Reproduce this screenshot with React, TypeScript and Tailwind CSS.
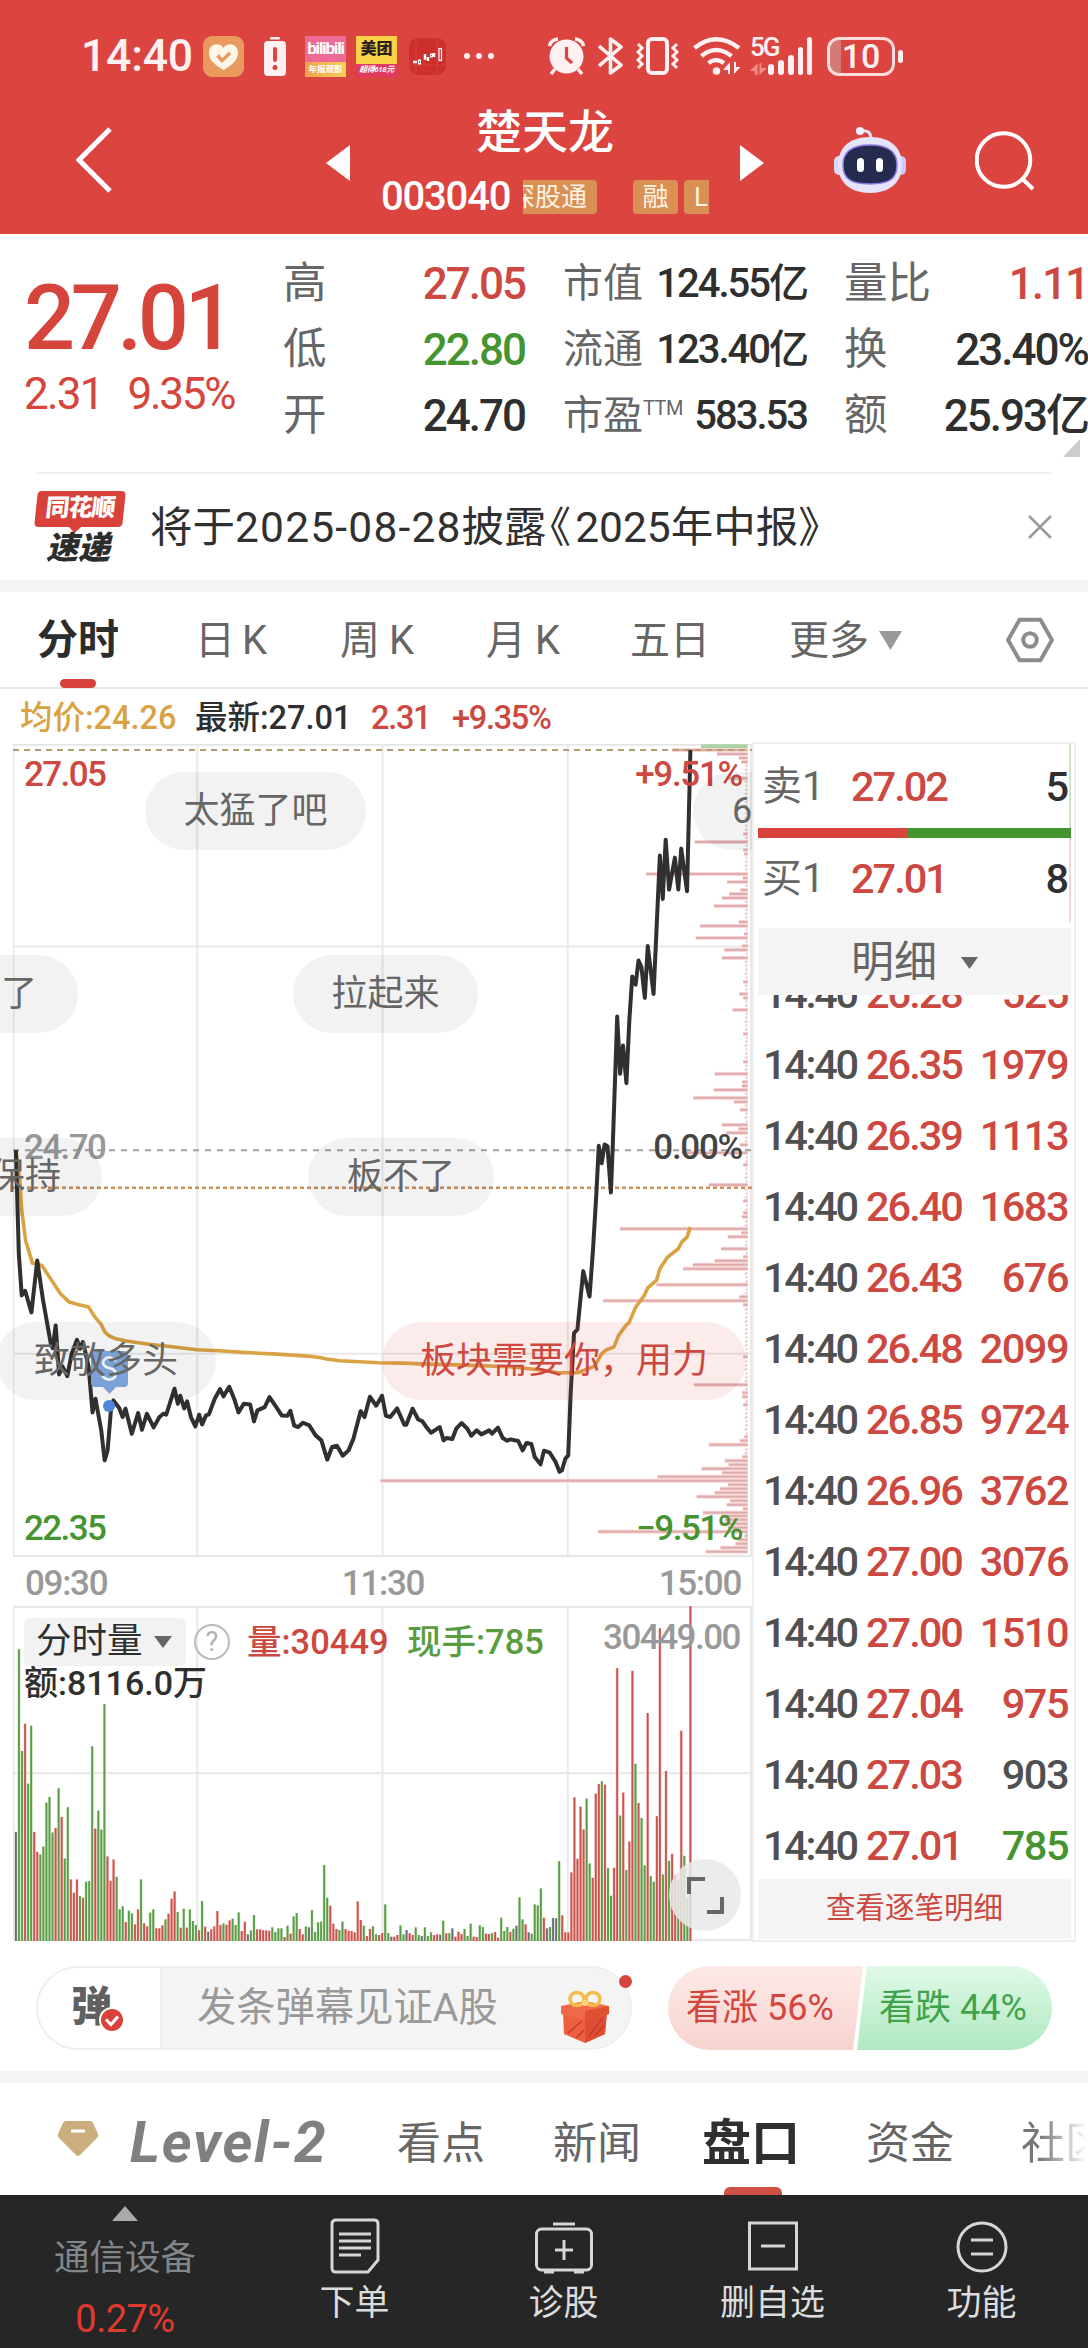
import React from 'react';

type Tone = 'red' | 'green' | 'dark' | 'gray';

interface Trade {
  price: string;
  volume: string;
  tone: Tone;
}

interface Bubble {
  text: string;
  box: string;
  hot?: boolean;
}

const toneClass: Record<Tone, string> = {
  red: 'text-[#cc4840]',
  green: 'text-[#46942f]',
  dark: 'text-[#2f2f2f]',
  gray: 'text-[#505050]',
};

const trades: Trade[] = [
  { price: '26.28', volume: '525', tone: 'red' },
  { price: '26.35', volume: '1979', tone: 'red' },
  { price: '26.39', volume: '1113', tone: 'red' },
  { price: '26.40', volume: '1683', tone: 'red' },
  { price: '26.43', volume: '676', tone: 'red' },
  { price: '26.48', volume: '2099', tone: 'red' },
  { price: '26.85', volume: '9724', tone: 'red' },
  { price: '26.96', volume: '3762', tone: 'red' },
  { price: '27.00', volume: '3076', tone: 'red' },
  { price: '27.00', volume: '1510', tone: 'red' },
  { price: '27.04', volume: '975', tone: 'red' },
  { price: '27.03', volume: '903', tone: 'gray' },
  { price: '27.01', volume: '785', tone: 'green' },
];

const bubbles: Bubble[] = [
  { text: '太猛了吧', box: 'left-[145px] top-[28px] w-[221px]' },
  { text: '6', box: 'left-[693px] top-[28px] w-[98px]' },
  { text: '来了', box: 'left-[-76px] top-[211px] w-[154px]' },
  { text: '拉起来', box: 'left-[293px] top-[211px] w-[185px]' },
  { text: '保持', box: 'left-[-52px] top-[394px] w-[154px]' },
  { text: '板不了', box: 'left-[308px] top-[394px] w-[186px]' },
  { text: '致敬多头', box: 'left-[-4px] top-[578px] w-[220px]' },
  { text: '板块需要你，用力', box: 'left-[382px] top-[578px] w-[364px]', hot: true },
];

const pricePath =
  'M32,1219 38,1530 44,1655 51,1641 64,1706 76,1550 88,1670 104,1800 108,1813 114,1745 121,1892 128,1868 138,1897 147,1830 158,1788 164,1815 170,1795 176,1830 182,1870 190,2006 196,1965 208,2060 215,2150 221,2121 228,1999 233,1970 245,1993 252,2020 258,1995 271,2070 284,2008 292,2058 302,2010 316,2051 328,2020 336,2010 342,2013 359,1935 366,1980 371,1956 379,1994 385,1973 393,2020 402,2048 410,2013 416,2042 424,2015 430,2012 442,1965 453,1936 460,1958 472,1929 482,1965 491,2006 502,1980 515,1982 523,2033 530,2000 545,1990 555,1960 568,1988 580,2015 592,2016 598,2001 606,2046 614,2050 624,2037 637,2045 650,2075 662,2090 674,2148 684,2110 694,2106 706,2136 718,2120 728,2085 743,2002 751,2020 762,1959 775,1986 787,1956 795,2016 804,2020 818,1994 833,2043 837,2043 850,1995 862,2028 870,2032 880,2053 888,2067 906,2050 914,2090 920,2083 932,2086 940,2055 951,2038 963,2055 971,2076 982,2060 992,2072 1008,2060 1014,2070 1026,2052 1036,2083 1045,2091 1052,2087 1068,2092 1077,2120 1085,2098 1095,2101 1102,2140 1114,2162 1121,2121 1133,2127 1145,2155 1153,2184 1158,2180 1165,2145 1171,2135 1176,1950 1183,1768 1190,1757 1202,1582 1215,1658 1222,1520 1229,1350 1234,1206 1240,1258 1246,1202 1252,1207 1259,1346 1263,1200 1272,818 1278,990 1284,905 1291,1018 1297,830 1303,698 1310,722 1316,650 1322,670 1329,762 1335,606 1347,750 1353,560 1360,335 1366,465 1372,287 1379,437 1391,341 1398,437 1404,314 1416,442 1423,18';

const avgPath =
  'M32,1219 40,1310 44,1400 52,1490 66,1558 76,1560 86,1566 104,1606 124,1650 142,1675 160,1682 182,1690 195,1720 208,1742 215,1764 224,1776 236,1784 260,1792 285,1797 310,1802 350,1808 405,1818 450,1821 500,1826 570,1831 640,1838 662,1842 672,1846 700,1851 780,1857 830,1858 880,1861 960,1864 1050,1869 1090,1875 1120,1880 1150,1887 1190,1887 1225,1868 1240,1830 1250,1818 1265,1810 1275,1775 1290,1745 1297,1735 1310,1690 1328,1655 1335,1632 1353,1610 1360,1575 1376,1540 1398,1515 1405,1495 1416,1480 1423,1450';

// [y, left edge] of each price level in the distribution on the right side
const levels: [number, number][] = [
  [18, 1385], [30, 1478], [42, 1523], [54, 1528], [103, 1500], [270, 1532], [294, 1432], [318, 1532], [330, 1534], [390, 1332],
  [402, 1531], [414, 1499], [438, 1526], [450, 1503], [462, 1488], [486, 1472], [534, 1523], [546, 1443], [570, 1534],
  [582, 1434], [606, 1530], [618, 1493], [642, 1488], [714, 1532], [750, 1524], [762, 1532], [798, 1510], [870, 1532], [954, 1532],
  [990, 1473], [1014, 1530], [1026, 1529], [1038, 1471], [1062, 1429], [1074, 1513], [1098, 1525], [1143, 1488],
  [1155, 1522], [1167, 1497], [1203, 1525], [1227, 1405], [1263, 1532], [1323, 1461], [1371, 1532], [1407, 1532], [1419, 1529],
  [1455, 1278], [1467, 1528], [1479, 1500], [1515, 1486], [1539, 1532], [1551, 1473], [1563, 1428], [1575, 1408],
  [1623, 1353], [1659, 1524], [1671, 1243], [1683, 1532], [1839, 1532], [1923, 1430], [1947, 1530], [1959, 1530], [1983, 1532],
  [2079, 1534], [2091, 1525], [2103, 1461], [2139, 1530], [2151, 1494], [2163, 1502], [2175, 1446], [2187, 1488], [2199, 1355],
  [2211, 784], [2223, 1501], [2235, 1484], [2247, 1473], [2259, 1436], [2271, 1505], [2283, 1498], [2295, 1531],
  [2307, 1449], [2317, 1486], [2328, 1494], [2340, 1484], [2352, 1500], [2364, 1233], [2376, 1535], [2388, 1521],
  [2400, 1516], [2412, 1485], [2424, 1455],
];

// One entry per minute: color letter followed by the bar height
const volumeData =
  'k328 g877 g571 r653 g473 g647 r328 r268 g260 g284 g416 g433 g326 r340 g459 r373 g248 g402 r185 r145 r185 g135 r130 g178 g180 g585 r338 g392 g335 g712 r254 r181 r245 g193 g95 g104 r57 g91 g83 r50 r95 g185 r53 r44 g85 g95 r38 r38 r47 g65 r82 r127 r149 g87 r40 g97 r40 g95 g60 g48 r32 g120 r43 k28 r35 r44 r90 r48 g53 r49 r62 g67 g48 g86 r30 r58 k20 g32 g78 r35 r35 r32 r32 r31 g41 g27 g38 g38 r12 g46 r22 g74 g84 r36 r20 g44 k41 g93 g27 g56 g58 g228 g130 r106 r52 r36 g33 g58 r36 r31 r30 r26 r119 r63 g46 r15 r36 g44 g20 r18 r24 g110 g24 k13 r13 r18 g47 g20 k33 r23 r18 g41 g18 k15 g41 g15 g26 r18 r20 k19 g61 r23 g24 k38 r13 r28 r21 g36 g15 g52 r13 r12 g47 g42 r22 r21 g23 r27 r10 g70 g30 g42 r27 g37 k46 g131 g65 r50 k26 g22 g110 g107 g158 r70 k38 g42 k69 k68 g240 r77 r26 r26 r206 r432 r247 r404 r335 g428 g233 r190 r443 r472 g480 r470 g219 g136 r220 r820 g377 r446 g213 r299 r812 g533 r415 g370 g227 r685 g195 g178 r375 r940 g200 r511 g241 r262 r197 g182 r632 g256 g128 r1007';

const barColor: Record<string, string> = { r: '#c9544d', g: '#5a9c47', k: '#6c6c74' };
const barGlow: Record<string, string> = { r: '#f6c6c4', g: '#c9e4c0', k: '#d4d4dc' };

const StatusBar: React.FC = () => (
  <div className="flex h-[112px] items-center pl-[81px] text-[#fff1f1]">
    <span className="w-[122px] text-[44.500px] leading-none font-medium tracking-[-0.200px]">14:40</span>
    <svg className="h-[41px] w-[41px]" viewBox="0 0 41 41">
      <rect width="41" height="41" rx="9" fill="#ea9a5d" />
      <path d="M20.500 34C12 29 6 24 6 17C6 7 17 6 20.500 12C24 6 35 7 35 17C35 24 29 29 20.500 34Z" fill="#fff6ea" />
      <path d="M14.500 19.500L19 24.500L27 17" fill="none" stroke="#ea9a5d" strokeWidth="3.500" />
    </svg>
    <svg className="ml-[20px] h-[39px] w-[22px]" viewBox="0 0 22 39">
      <rect x="6" width="10" height="2.500" rx="1" fill="#fff1f1" />
      <rect y="4" width="22" height="35" rx="4" fill="#fff1f1" />
      <path d="M11 12V23" stroke="#dc4440" strokeWidth="4" strokeLinecap="round" />
      <circle cx="11" cy="30.500" r="2.500" fill="#dc4440" />
    </svg>
    <div className="ml-[19px] flex h-[41px] w-[41px] flex-col overflow-hidden bg-[#ec6a95] text-center whitespace-nowrap">
      <div className="h-[26px] text-[17px] leading-[25px] font-bold tracking-[-1.200px] text-white">bilibili</div>
      <div className="h-[15px] bg-gradient-to-r from-[#efa24c] to-[#f6cf58] text-[8.500px] leading-[15px] font-bold text-white">年报观影</div>
    </div>
    <div className="ml-[10px] flex h-[41px] w-[41px] flex-col overflow-hidden bg-[#fad247] text-center whitespace-nowrap">
      <div className="h-[28px] text-[16px] leading-[26px] font-black text-[#2a2418]">美团</div>
      <div className="h-[13px] bg-[#e03a63] text-[8px] leading-[12px] font-bold tracking-[-0.500px] text-white italic">超得618元</div>
    </div>
    <svg className="ml-[12px] h-[37px] w-[37px]" viewBox="0 0 37 37">
      <rect width="37" height="37" rx="9" fill="#cd2f2c" />
      <path d="M0 27H37M7 0V37M28 0V37" stroke="#d8403b" />
      <path d="M4 24H8M16 16V22M19 19V23M25 15V19" stroke="#fff" strokeWidth="2.500" />
      <rect x="9.500" y="22" width="2" height="4" fill="none" stroke="#fff" />
      <rect x="21.500" y="16" width="2" height="3" fill="none" stroke="#fff" />
      <rect x="30" y="10.500" width="2.500" height="12" fill="none" stroke="#fff" strokeWidth="1.200" />
    </svg>
    <div className="ml-[18px] flex gap-[6px]">
      <i className="h-[6px] w-[6px] rounded-full bg-[#fff1f1]" />
      <i className="h-[6px] w-[6px] rounded-full bg-[#fff1f1]" />
      <i className="h-[6px] w-[6px] rounded-full bg-[#fff1f1]" />
    </div>
    <svg className="ml-[54px] h-[38px] w-[37px]" viewBox="0 0 37 38" fill="none" stroke="#fff1f1">
      <circle cx="18.500" cy="19.500" r="17" fill="#fff1f1" stroke="none" />
      <path d="M1.500 9Q3 2.500 10 2M35.500 9Q34 2.500 27 2M7 32L3 37M30 32L34 37" strokeWidth="3.500" />
      <path d="M18.500 10V21L24 26" stroke="#dc4440" strokeWidth="3.200" />
    </svg>
    <svg className="ml-[13px] h-[38px] w-[25px]" viewBox="0 0 25 38" fill="none" stroke="#fff1f1" strokeWidth="3.600">
      <path d="M1 9L23 28L12.500 36V2L23 10L1 29" strokeLinejoin="round" />
    </svg>
    <svg className="ml-[13px] h-[38px] w-[43px]" viewBox="0 0 43 38" fill="none" stroke="#fff1f1">
      <rect x="12" y="2" width="19" height="34" rx="4" strokeWidth="4" />
      <path d="M2 7L6 11L2 15L6 19L2 23L6 27L2 31M41 7L37 11L41 15L37 19L41 23L37 27L41 31" strokeWidth="3" />
    </svg>
    <svg className="ml-[14px] h-[38px] w-[48px]" viewBox="0 0 48 38" fill="none" stroke="#fff1f1" strokeWidth="4.400">
      <path d="M1.500 11Q23 -6.500 46 11M8.500 19Q23 7 38.500 19M15.500 26Q23 20 31 26" />
      <circle cx="23.500" cy="34" r="3.800" fill="#fff1f1" stroke="none" />
      <path d="M37 37V25L30 33H35V37ZM41 25V37L47.500 30H43V25Z" fill="#fff1f1" stroke="none" />
    </svg>
    <div className="ml-[9px] flex h-[38px] w-[62px] items-end gap-[4px]">
      <div className="relative h-full w-[15px]">
        <span className="absolute top-0 left-0 text-[26px] leading-[20px] font-medium tracking-[-2px]">5G</span>
        <svg className="absolute bottom-0 left-0 h-[12px] w-[17px]" viewBox="0 0 18 12" fill="#ef8f8c">
          <path d="M8 12V0L0 8H5V12ZM10 0V12L18 5H12V0Z" />
        </svg>
      </div>
      <i className="h-[11px] w-[6px] shrink-0 rounded-sm bg-[#fff1f1]" />
      <i className="h-[15px] w-[6px] shrink-0 rounded-sm bg-[#fff1f1]" />
      <i className="h-[20px] w-[6px] shrink-0 rounded-sm bg-[#fff1f1]" />
      <i className="h-[28px] w-[5px] shrink-0 rounded-sm bg-[#fff1f1]" />
      <i className="h-[38px] w-[5px] shrink-0 rounded-sm bg-[#fff1f1]" />
    </div>
    <div className="ml-[15px] flex h-[39px] w-[68px] items-center justify-center rounded-[12px] border-[3px] border-[#fbdcdb] bg-gradient-to-r from-[#d27a75] from-18% to-transparent to-18% text-[34px] leading-none font-medium">
      10
    </div>
    <i className="ml-[3px] h-[13px] w-[5px] rounded-sm bg-[#fff1f1]" />
  </div>
);

const Header: React.FC = () => (
  <header className="h-[234px] bg-[#dc4440] text-white">
    <StatusBar />
    <div className="flex h-[110px] items-center">
      <svg className="mt-[-15px] ml-[76px] h-[66px] w-[36px]" viewBox="0 0 36 66" fill="none" stroke="#fff" strokeWidth="5">
        <path d="M34 2L3 33L34 64" />
      </svg>
      <svg className="mt-[-8px] ml-[214px] h-[36px] w-[24px]" viewBox="0 0 24 36" fill="#fff">
        <path d="M24 0V36L0 18Z" />
      </svg>
      <div className="mt-[-13px] flex w-[390px] flex-col items-center">
        <h1 className="text-[46px] leading-[50px] font-medium">楚天龙</h1>
        <div className="mt-[23px] flex h-[34px] items-center">
          <span className="w-[142px] text-[40px] leading-none font-medium tracking-[-1.200px]">003040</span>
          <div className="flex w-[186px] overflow-hidden text-[26px] leading-[34px] text-[#fff3e4]">
            <span className="ml-[-14px] shrink-0 rounded bg-[#d89055] pr-[10px]">深股通</span>
            <span className="ml-[36px] w-[45px] shrink-0 rounded bg-[#d89055] text-center">融</span>
            <span className="ml-[6px] w-[45px] shrink-0 rounded bg-[#d89055] pl-[10px] tracking-[3px]">L2</span>
          </div>
        </div>
      </div>
      <svg className="mt-[-8px] h-[36px] w-[24px]" viewBox="0 0 24 36" fill="#fff">
        <path d="M0 0V36L24 18Z" />
      </svg>
      <svg className="mt-[-15px] ml-[70px] h-[66px] w-[72px]" viewBox="0 0 72 66">
        <path d="M26 4Q37 2 37 12" fill="none" stroke="#e9e1f7" strokeWidth="3" />
        <circle cx="26" cy="4" r="4" fill="#f3effc" />
        <rect x="0" y="29" width="10" height="19" rx="5" fill="#dcd8f8" />
        <rect x="62" y="29" width="10" height="19" rx="5" fill="#cdc9f6" />
        <path d="M36 10C58 10 68 22 68 38C68 55 56 66 36 66C16 66 4 55 4 38C4 22 14 10 36 10Z" fill="#e6e4fa" />
        <path d="M36 18C55 18 63 25 63 38C63 52 55 57 36 57C17 57 9 52 9 38C9 25 17 18 36 18Z" fill="#242b4e" stroke="#8b7be4" strokeWidth="1.500" />
        <rect x="23" y="31" width="7" height="14" rx="3.500" fill="#fff" />
        <rect x="42" y="31" width="7" height="14" rx="3.500" fill="#fff" />
      </svg>
      <svg className="mt-[-13px] ml-[69px] h-[60px] w-[60px]" viewBox="0 0 60 60" fill="none" stroke="#fff" strokeWidth="4">
        <circle cx="28.500" cy="29" r="26.800" />
        <path d="M47.500 48L58 58" />
      </svg>
    </div>
  </header>
);

const StatRow: React.FC<{ label: React.ReactNode; value: string; tone?: Tone; small?: boolean }> = ({
  label,
  value,
  tone = 'dark',
  small,
}) => (
  <div className="flex h-[66px] items-center justify-between whitespace-nowrap">
    <span className={small ? 'text-[40px] leading-none text-[#666]' : 'text-[43.500px] leading-none text-[#666]'}>{label}</span>
    <span
      className={`${small ? 'text-[40px] tracking-[-2px]' : 'text-[44px] tracking-[-2px]'} leading-none font-medium ${toneClass[tone]}`}
    >
      {value}
    </span>
  </div>
);

const Quote: React.FC = () => (
  <section className="relative flex h-[238px] pt-[17px]">
    <div className="w-[283px] pl-[24px] text-[#d6453c]">
      <div className="mt-[23px] text-[90px] leading-[90px] font-medium tracking-[-4.500px]">27.01</div>
      <div className="mt-[5px] flex gap-[25px] text-[44px] leading-[50px] tracking-[-1.800px]">
        <span>2.31</span>
        <span className="tracking-[-2.300px]">9.35%</span>
      </div>
    </div>
    <div className="w-[242px]">
      <StatRow label="高" value="27.05" tone="red" />
      <StatRow label="低" value="22.80" tone="green" />
      <StatRow label="开" value="24.70" />
    </div>
    <div className="ml-[38px] w-[244px]">
      <StatRow label="市值" value="124.55亿" small />
      <StatRow label="流通" value="123.40亿" small />
      <StatRow
        label={
          <span className="flex">
            市盈<span className="text-[20px] leading-[24px] tracking-[-0.500px]">TTM</span>
          </span>
        }
        value="583.53"
        small
      />
    </div>
    <div className="ml-[37px] w-[244px]">
      <StatRow label="量比" value="1.11" tone="red" />
      <StatRow label="换" value="23.40%" />
      <StatRow label="额" value="25.93亿" />
    </div>
    <svg className="absolute right-[8px] bottom-[15px] h-[18px] w-[17px]" viewBox="0 0 17 18" fill="#ccc">
      <path d="M17 0V18H0Z" />
    </svg>
  </section>
);

const NewsBar: React.FC = () => (
  <section className="mx-[36px] flex h-[108px] items-center border-t-2 border-[#efefef]">
    <div className="flex w-[114px] flex-col items-start">
      <div className="relative h-[36px] w-[88px] -skew-x-6 rounded bg-[#d8423b] text-center text-[24px] leading-[35px] font-black tracking-[-1px] text-white">
        同花顺
        <i className="absolute bottom-[-4px] left-[36px] h-[10px] w-[10px] rotate-45 bg-[#d8423b]" />
      </div>
      <div className="mt-[6px] ml-[10px] text-[32px] leading-[30px] font-black text-[#2d2d2d] italic">速递</div>
    </div>
    <span className="pt-[2px] text-[42.500px] leading-none whitespace-nowrap text-[#303030]">
      将于<span className="tracking-[1.200px]">2025-08-28</span>披露<span className="ml-[-18px] mr-[4px]">《</span>2025年中报》
    </span>
    <svg className="ml-auto h-[24px] w-[24px]" viewBox="0 0 24 24" stroke="#999" strokeWidth="2.500">
      <path d="M1 1L23 23M23 1L1 23" />
    </svg>
  </section>
);

const PeriodTabs: React.FC = () => (
  <nav className="flex h-[97px] items-center border-b-2 border-[#eaeaea] text-[40px] leading-none whitespace-nowrap text-[#666]">
    <div className="relative ml-[37px] w-[158px] pt-[2px] text-[41px] font-bold text-[#2c2c2c]">
      分时
      <i className="absolute top-[61px] left-[23px] h-[9px] w-[36px] rounded-full bg-[#d6423b]" />
    </div>
    <span className="w-[145px] pt-[2px] tracking-[-1.500px]">日 K</span>
    <span className="w-[146px] pt-[2px] tracking-[-0.500px]">周 K</span>
    <span className="w-[144px] pt-[2px] tracking-[-0.500px]">月 K</span>
    <span className="w-[159px] pt-[2px]">五日</span>
    <span className="flex w-[217px] items-center gap-[10px] pt-[2px]">
      更多
      <svg className="h-[20px] w-[23px]" viewBox="0 0 23 20" fill="#999">
        <path d="M0 0H23L11.500 19Z" />
      </svg>
    </span>
    <svg className="h-[46px] w-[48px]" viewBox="0 0 46 44" fill="none" stroke="#8c8c8c" strokeWidth="3.800" strokeLinejoin="round">
      <path d="M13 2.500H33L44 22L33 41.500H13L2 22Z" />
      <circle cx="23" cy="22" r="6.500" />
    </svg>
  </nav>
);

const PriceChart: React.FC = () => (
  <div className="relative h-[813px] w-[752px] overflow-hidden">
    <svg className="ml-[13px] h-[813px] w-[739px]" viewBox="26 0 1524 2440" preserveAspectRatio="none" fill="none">
      <path d="M27 0V2440M406 0V2440M788 0V2440M1170 0V2440M1548 0V2440M26 608H1550M26 1830H1550" stroke="#e9e9e9" strokeWidth="2" vectorEffect="non-scaling-stroke" />
      <path d="M26 2H1550M26 2437H1550" stroke="#e6e6e6" strokeWidth="2" vectorEffect="non-scaling-stroke" />
      {Array.from({ length: 200 }, (_, i) => (
        <rect key={i} x={1537 - ((i * 7) % 3)} y={14 + i * 12} width={4 + ((i * 7) % 3)} height="6" fill="#ecc4c4" />
      ))}
      {levels.map(([y, left]) => (
        <g key={y}>
          <rect x={left} y={y - 6} width={1541 - left} height="12" fill="#f8d5d5" />
          <rect x={left} y={y - 3} width={1541 - left} height="6" fill="#deacac" />
        </g>
      ))}
      <rect x="1445" y="1" width="96" height="11" fill="#abd2a3" />
      <path d="M26 18H1550" stroke="#b0a070" strokeWidth="2" strokeDasharray="6 5" vectorEffect="non-scaling-stroke" />
      <path d="M26 1219H1550" stroke="#a0a0a0" strokeWidth="2" strokeDasharray="6 6" vectorEffect="non-scaling-stroke" />
      <path d="M26 1332H1550" stroke="#cf8f57" strokeWidth="2.400" strokeDasharray="4 3" vectorEffect="non-scaling-stroke" />
      <path d={avgPath} stroke="#d9a344" strokeWidth="3.600" strokeLinejoin="round" vectorEffect="non-scaling-stroke" />
      <path d={pricePath} stroke="#303030" strokeWidth="4" strokeLinejoin="round" vectorEffect="non-scaling-stroke" />
    </svg>

    <svg className="absolute top-[607px] left-[91px] h-[62px] w-[37px]" viewBox="0 0 37 62">
      <path d="M4 0H33Q37 0 37 4V32Q37 36 33 36H25L18.500 43L12 36H4Q0 36 0 32V4Q0 0 4 0Z" fill="#83aae3" />
      <path d="M25 10Q18 3 13 9Q10 15 18 17Q27 19 24 26Q18 32 11 25" fill="none" stroke="#fff" strokeWidth="2.500" />
      <circle cx="18" cy="55" r="6" fill="#4f86dc" />
    </svg>

    <span className="absolute top-[13px] left-[24px] text-[35px] leading-none font-medium tracking-[-1.600px] text-[#cc4840]">27.05</span>
    <span className="absolute top-[13px] right-[10px] text-[35px] leading-none font-medium tracking-[-1.300px] text-[#cc4840]">+9.51%</span>
    <span className="absolute top-[386px] left-[24px] text-[35px] leading-none font-medium tracking-[-1.600px] text-[#999]">24.70</span>
    <span className="absolute top-[386px] right-[10px] text-[35px] leading-none font-medium tracking-[-1.300px] text-[#444]">0.00%</span>
    <span className="absolute top-[767px] left-[24px] text-[35px] leading-none font-medium tracking-[-1.600px] text-[#46942f]">22.35</span>
    <span className="absolute top-[767px] right-[10px] text-[35px] leading-none font-medium tracking-[-1.500px] text-[#46942f]">−9.51%</span>

    {bubbles.map((b) => (
      <div
        key={b.text}
        className={`absolute flex h-[78px] items-center justify-center rounded-full text-[36px] leading-none whitespace-nowrap ${b.box} ${
          b.hot ? 'bg-[#d6423b]/10 text-[#cc4840]' : 'bg-black/5 text-[#666]'
        }`}
      >
        {b.text}
      </div>
    ))}
  </div>
);

const VolumeChart: React.FC = () => (
  <div className="relative h-[335px] w-[752px]">
    <svg className="ml-[13px] h-[335px] w-[739px]" viewBox="26 0 1524 1007" preserveAspectRatio="none" fill="none">
      <path d="M27 0V1007M406 0V1007M788 0V1007M1170 0V1007M1548 0V1007M26 3H1550M26 503H1550M26 1004H1550" stroke="#e8e8e8" strokeWidth="2" vectorEffect="non-scaling-stroke" />
      {volumeData.split(' ').map((item, i) => {
        const h = Number(item.slice(1));
        const x = 32 + i * 6.294;
        return (
          <g key={i}>
            <rect x={x - 3} y={1007 - h} width="6" height={h} fill={barGlow[item[0]]} />
            <rect x={x - 1.9} y={1007 - h} width="3.800" height={h} fill={barColor[item[0]]} />
          </g>
        );
      })}
    </svg>
    <div className="absolute top-[12px] left-[24px] flex h-[48px] items-center whitespace-nowrap">
      <div className="flex h-full w-[162px] items-center gap-[11px] rounded-md bg-[#f2f2f2] pl-[12px] text-[35.500px] leading-none text-[#2f2f2f]">
        分时量
        <svg className="h-[12px] w-[18px]" viewBox="0 0 18 12" fill="#666">
          <path d="M0 0H18L9 12Z" />
        </svg>
      </div>
      <span className="ml-[8px] flex h-[36px] w-[36px] items-center justify-center rounded-full border-[2.500px] border-[#bbb] text-[27px] leading-none text-[#b0b0b0]">
        ?
      </span>
      <span className="ml-[17px] w-[160px] pt-[1px] text-[34.500px] leading-none font-medium text-[#cc4840]">量:30449</span>
      <span className="pt-[1px] text-[34.500px] leading-none font-medium text-[#5a9c3f]">现手:785</span>
    </div>
    <span className="absolute top-[14px] right-[12px] text-[35px] leading-none font-medium tracking-[-1.500px] text-[#999]">30449.00</span>
    <span className="absolute top-[60px] left-[24px] text-[34px] leading-none font-medium text-[#2f2f2f]">额:8116.0万</span>
    <div className="absolute top-[253px] left-[669px] flex h-[72px] w-[72px] items-center justify-center rounded-full bg-[#e9e9e9]/85">
      <svg className="h-[37px] w-[37px]" viewBox="0 0 37 37" fill="none" stroke="#666" strokeWidth="4">
        <path d="M2 17V2H18M35 20V35H20" />
      </svg>
    </div>
  </div>
);

const OrderPanel: React.FC = () => (
  <aside className="mt-[-2px] h-[1200px] w-[324px] overflow-hidden border-2 border-[#efefef] pr-[3px] pl-[4px]">
    <div className="flex h-[84px] items-center border-r-2 border-[#cfe4c9] pt-[2px] pl-[4px] leading-none">
      <span className="w-[89px] text-[40px] text-[#666]">卖1</span>
      <span className="text-[41.500px] font-medium tracking-[-2px] text-[#cc4840]">27.02</span>
      <span className="ml-auto text-[41.500px] font-medium text-[#2f2f2f]">5</span>
    </div>
    <div className="flex h-[10px]">
      <div className="w-[149px] bg-[#d8443d]" />
      <div className="flex-1 bg-[#46942f]" />
    </div>
    <div className="flex h-[84px] items-center border-r-2 border-[#f2d5d4] pb-[3px] pl-[4px] leading-none">
      <span className="w-[89px] text-[40px] text-[#666]">买1</span>
      <span className="text-[41.500px] font-medium tracking-[-2px] text-[#cc4840]">27.01</span>
      <span className="ml-auto text-[41.500px] font-medium text-[#2f2f2f]">8</span>
    </div>
    <div className="relative z-10 mt-[6px] flex h-[67px] items-center justify-center gap-[24px] bg-[#f4f4f4] pt-[2px] text-[43px] leading-none text-[#666]">
      明细
      <svg className="h-[12px] w-[17px]" viewBox="0 0 17 12" fill="#666">
        <path d="M0 0H17L8.500 12Z" />
      </svg>
    </div>
    <div className="mt-[-38px] h-[922px] overflow-hidden">
      {trades.map((t, i) => (
        <div key={i} className="flex h-[71px] items-center pt-[2px] pr-[3px] pl-[5px] text-[41.500px] leading-none font-medium">
          <span className="w-[103px] tracking-[-2.300px] text-[#505050]">14:40</span>
          <span className="tracking-[-2px] text-[#cc4840]">{t.price}</span>
          <span className={`ml-auto tracking-[-1.500px] ${toneClass[t.tone]}`}>{t.volume}</span>
        </div>
      ))}
    </div>
    <div className="flex h-[60px] items-center justify-center bg-[#f4f4f4] text-[29.500px] leading-none text-[#cc4840]">查看逐笔明细</div>
  </aside>
);

const Barrage: React.FC = () => (
  <section className="mt-[25px] mb-[21px] flex h-[84px] px-[36px]">
    <div className="relative flex w-[596px] items-center rounded-full border-2 border-[#efefef] bg-[#f4f4f4]">
      <div className="relative flex h-full w-[124px] items-center rounded-l-full border-r-2 border-[#efefef] bg-white pl-[33px] text-[41px] font-black text-[#606060]">
        弹
        <svg className="absolute top-[39px] left-[61px] h-[26px] w-[26px]" viewBox="0 0 26 26">
          <circle cx="13" cy="13" r="12" fill="#d8443d" stroke="#fff" strokeWidth="2" />
          <path d="M7 12.500L12 17.500L19 9.500" fill="none" stroke="#fff" strokeWidth="3" />
        </svg>
      </div>
      <span className="ml-[35px] pt-[2px] text-[39.300px] leading-none text-[#999]">发条弹幕见证A股</span>
      <svg className="absolute top-[22px] left-[522px] h-[54px] w-[50px]" viewBox="0 0 50 54">
        <path d="M3 22H47L45 44L25 53L4 44Z" fill="#ec6040" />
        <path d="M25 24L47 20L45 44L25 53Z" fill="#df4d35" />
        <path d="M1 16L25 11L49 16V24L25 30L1 24Z" fill="#f2684a" />
        <path d="M25 21L49 16V24L25 30Z" fill="#e0502f" />
        <path d="M8 43L22 31M16 48L24 40M28 47L42 29M34 46L44 36" stroke="#c63a28" strokeWidth="1.500" />
        <ellipse cx="17" cy="9" rx="7" ry="6.500" fill="none" stroke="#f5bd4c" strokeWidth="3.500" />
        <ellipse cx="33" cy="9" rx="7" ry="6.500" fill="none" stroke="#f5bd4c" strokeWidth="3.500" />
        <circle cx="25" cy="13" r="3" fill="#fbd77c" />
      </svg>
      <i className="absolute top-[7px] right-[-2px] h-[13px] w-[13px] rounded-full bg-[#d4453d]" />
    </div>
    <div className="ml-[36px] flex w-[384px] overflow-hidden rounded-full text-[36px] leading-none whitespace-nowrap">
      <div className="flex w-[195px] items-center bg-gradient-to-b from-[#fdeae8] to-[#f7d3cf] pl-[18px] text-[#d4453d] [clip-path:polygon(0_0,100%_0,185px_100%,0_100%)]">
        看涨 56%
      </div>
      <div className="ml-[-6px] flex flex-1 items-center bg-gradient-to-b from-[#e0f9e8] to-[#afe9c0] pl-[22px] text-[#3fa34b] [clip-path:polygon(10px_0,100%_0,100%_100%,0_100%)]">
        看跌 44%
      </div>
    </div>
  </section>
);

const InfoTabs: React.FC = () => (
  <nav className="relative flex h-[112px] items-center overflow-hidden text-[44px] leading-none whitespace-nowrap text-[#666]">
    <svg className="ml-[57px] h-[36px] w-[42px] shrink-0" viewBox="0 0 42 36">
      <path d="M9 0H33Q35 0 36 2L41 13Q42 15 40 17L23 34Q21 36 19 34L2 17Q0 15 1 13L6 2Q7 0 9 0Z" fill="#cbae7e" />
      <path d="M14 10H28" stroke="#fff" strokeWidth="3" />
    </svg>
    <span className="ml-[31px] w-[267px] shrink-0 pt-[7px] text-[57px] font-bold tracking-[1.800px] text-[#808080] italic">Level-2</span>
    <span className="w-[156px] shrink-0 pt-[9px]">看点</span>
    <span className="w-[149px] shrink-0 pt-[9px]">新闻</span>
    <span className="relative w-[164px] shrink-0 pt-[9px] text-[49px] font-bold text-[#2f2f2f]">
      盘口
      <i className="absolute top-[77px] left-[22px] h-[14px] w-[58px] rounded-md bg-[#cf5046]" />
    </span>
    <span className="w-[155px] shrink-0 pt-[9px]">资金</span>
    <span className="shrink-0 bg-gradient-to-r from-[#777] from-20% to-[#fff] to-75% bg-clip-text pt-[9px] text-transparent">社区</span>
  </nav>
);

const BottomItem: React.FC<{ label: string; children: React.ReactNode }> = ({ label, children }) => (
  <div className="flex w-[209px] flex-col items-center">
    <svg className="mt-[22px] h-[58px] w-[58px]" viewBox="0 0 58 58" fill="none" stroke="#d6d6d6" strokeWidth="3">
      {children}
    </svg>
    <span className="mt-[11px] text-[35px] leading-[36px] text-[#dcdcdc]">{label}</span>
  </div>
);

const BottomBar: React.FC = () => (
  <footer className="flex h-[153px] bg-[#262626]">
    <div className="flex w-[250px] flex-col items-center">
      <svg className="mt-[11px] h-[15px] w-[26px]" viewBox="0 0 26 15" fill="#aaa">
        <path d="M13 0L26 15H0Z" />
      </svg>
      <span className="mt-[18px] text-[35.500px] leading-[38px] text-[#80868a]">通信设备</span>
      <span className="mt-[23px] text-[38px] leading-[38px] tracking-[-0.500px] text-[#e03a2c]">0.27%</span>
    </div>
    <BottomItem label="下单">
      <path d="M10 3H48Q52 3 52 7V43L42 55H10Q6 55 6 51V7Q6 3 10 3Z" />
      <path d="M13 17H45M13 24H45M13 31H45M13 38H35" />
    </BottomItem>
    <BottomItem label="诊股">
      <path d="M18 7H40" />
      <rect x="1.500" y="12" width="55" height="41" rx="5" />
      <path d="M20 33H38M29 23V43M9 55H19M39 55H49" />
    </BottomItem>
    <BottomItem label="删自选">
      <rect x="5.500" y="6" width="47" height="46" />
      <path d="M17 29H41" />
    </BottomItem>
    <BottomItem label="功能">
      <circle cx="29" cy="30" r="24" />
      <path d="M18 23H40M18 37H40" />
    </BottomItem>
  </footer>
);

const App: React.FC = () => {
  return (
    <div className="h-[2348px] w-[1088px] overflow-hidden bg-white font-['Roboto','Noto_Sans_CJK_SC',sans-serif]">
      <Header />
      <Quote />
      <NewsBar />
      <div className="h-[12px] bg-[#f4f4f4]" />
      <PeriodTabs />
      <div className="flex h-[55px] items-center pt-[4px] pl-[20px] text-[32.500px] leading-none font-medium whitespace-nowrap">
        <span className="w-[175px] text-[#d9a344]">均价:24.26</span>
        <span className="w-[176px] text-[#2f2f2f]">最新:27.01</span>
        <span className="w-[81px] tracking-[-1.300px] text-[#cc4840]">2.31</span>
        <span className="tracking-[-1.300px] text-[#cc4840]">+9.35%</span>
      </div>
      <div className="flex h-[1197px]">
        <div className="w-[752px]">
          <PriceChart />
          <div className="flex h-[49px] items-center justify-between pt-[3px] pr-[11px] pl-[25px] text-[35px] leading-none font-medium tracking-[-1.300px] text-[#999]">
            <span>09:30</span>
            <span>11:30</span>
            <span>15:00</span>
          </div>
          <VolumeChart />
        </div>
        <OrderPanel />
      </div>
      <Barrage />
      <div className="h-[12px] bg-[#f4f4f4]" />
      <InfoTabs />
      <BottomBar />
    </div>
  );
};

export default App;
